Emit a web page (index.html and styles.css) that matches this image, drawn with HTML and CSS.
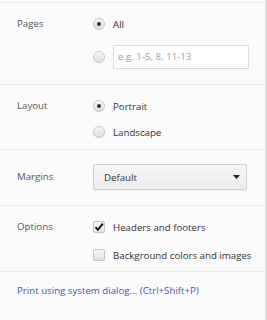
FILE: index.html
```html
<!DOCTYPE html>
<html lang="en">

<head>
    <meta charset="UTF-8">
    <meta name="viewport" content="width=device-width, initial-scale=1.0">
    <title>Print Settings</title>
    <link rel="stylesheet" href="styles.css">
</head>

<body>
    <div class="panel">
        <div class="group group-pages">
            <div class="label">Pages</div>
            <div class="choices">
                <div class="row"><span class="radio checked"></span><span class="text">All</span></div>
                <div class="row row-field">
                    <span class="radio"></span>
                    <div class="field">e.g. 1-5, 8, 11-13</div>
                </div>
            </div>
        </div>

        <div class="group group-layout">
            <div class="label">Layout</div>
            <div class="choices">
                <div class="row"><span class="radio checked"></span><span class="text">Portrait</span></div>
                <div class="row"><span class="radio"></span><span class="text">Landscape</span></div>
            </div>
        </div>

        <div class="group group-margins">
            <div class="label">Margins</div>
            <div class="choices">
                <div class="select">
                    <span>Default</span>
                    <svg class="arrow" width="7" height="4" viewBox="0 0 7 4"><path d="M0 0h7L3.5 4z" fill="#222" /></svg>
                </div>
            </div>
        </div>

        <div class="group group-options">
            <div class="label">Options</div>
            <div class="choices">
                <div class="row">
                    <span class="checkbox">
                        <svg width="10" height="10" viewBox="0 0 10 10"><path d="M1.5 5.2l2.4 2.6L8.8 1.6" fill="none" stroke="#111" stroke-width="1.9" /></svg>
                    </span>
                    <span class="text">Headers and footers</span>
                </div>
                <div class="row"><span class="checkbox"></span><span class="text">Background colors and images</span></div>
            </div>
        </div>

        <div class="footer">
            <a class="link" href="#">Print using system dialog... (Ctrl+Shift+P)</a>
        </div>
    </div>
</body>

</html>
```

FILE: styles.css
```css
* {
    box-sizing: border-box;
}

body,
html {
    height: 100%;
    margin: 0;
    font-family: "Open Sans", "Noto Sans", sans-serif;
    font-size: 9.7px;
    color: #333;
    background: #fff;
}

.panel {
    width: 267px;
    height: 320px;
    padding-top: 2px;
    background: #fbfbfb;
    border-right: 2px solid #dedede;
}

.group {
    display: flex;
    padding-left: 17px;
    border-top: 1px solid #eaeaea;
}

.group-pages {
    padding-top: 14px;
    padding-bottom: 15px;
}

.group-layout {
    padding-top: 14px;
    padding-bottom: 10px;
}

.group-margins {
    padding-top: 14px;
    padding-bottom: 15px;
}

.group-options {
    padding-top: 14px;
    padding-bottom: 9px;
}

.label {
    width: 76px;
    line-height: 14px;
    color: #555;
}

.group-margins .label {
    line-height: 26px;
}

.choices {
    display: flex;
    flex-direction: column;
}

.row {
    display: flex;
    align-items: center;
    gap: 8px;
    height: 14px;
}

.group-pages .row-field {
    height: 24px;
    margin-top: 14px;
}

.group-layout .row + .row {
    margin-top: 12px;
}

.group-options .row + .row {
    margin-top: 14px;
}

.text {
    color: #333;
    white-space: nowrap;
}

/* radio buttons */
.radio {
    width: 12px;
    height: 12px;
    border-radius: 50%;
    border: 1px solid #c4c4c4;
    background: linear-gradient(#f4f4f4, #e0e0e0);
    box-shadow: inset 0 1px 0 #fff;
    display: flex;
    align-items: center;
    justify-content: center;
    flex-shrink: 0;
}

.radio.checked::after {
    content: "";
    width: 4px;
    height: 4px;
    border-radius: 50%;
    background: #333;
}

/* checkboxes */
.checkbox {
    width: 12px;
    height: 12px;
    border-radius: 2px;
    border: 1px solid #c4c4c4;
    background: linear-gradient(#f6f6f6, #e2e2e2);
    display: flex;
    align-items: center;
    justify-content: center;
    flex-shrink: 0;
}

.field {
    width: 136px;
    height: 24px;
    border: 1px solid #dcdcdc;
    background: #fff;
    color: #a0a0a0;
    padding-left: 4px;
    line-height: 22px;
}

.select {
    width: 154px;
    height: 26px;
    border: 1px solid #d0d0d0;
    border-radius: 2px;
    background: linear-gradient(#f7f7f7, #ebebeb);
    box-shadow: 0 1px 1px rgba(0, 0, 0, 0.06);
    display: flex;
    align-items: center;
    justify-content: space-between;
    padding: 0 6px 0 10px;
    color: #333;
}

.footer {
    border-top: 1px solid #eaeaea;
    padding: 12px 0 0 17px;
    line-height: 14px;
}

.link {
    color: #4256c2;
    text-decoration: none;
    white-space: nowrap;
}
```
